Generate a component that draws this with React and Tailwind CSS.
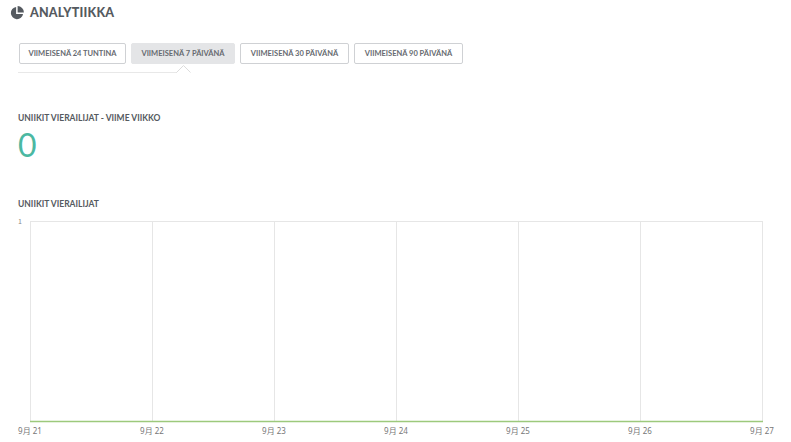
import React from 'react';

const TABS = [
  { label: 'VIIMEISENÄ 24 TUNTINA', w: 'w-[107px]' },
  { label: 'VIIMEISENÄ 7 PÄIVÄNÄ', w: 'w-[104px]', active: true },
  { label: 'VIIMEISENÄ 30 PÄIVÄNÄ', w: 'w-[109px]' },
  { label: 'VIIMEISENÄ 90 PÄIVÄNÄ', w: 'w-[109px]' },
];

const DAYS = ['9月 21', '9月 22', '9月 23', '9月 24', '9月 25', '9月 26', '9月 27'];

function PieIcon() {
  return (
    <svg width="14" height="14" viewBox="0 0 16 16" className="text-[#555a60]">
      <path d="M7 1.1A7 7 0 1 0 14.9 9H7z" fill="currentColor" />
      <path d="M8.7 0.1A7.2 7.2 0 0 1 15.9 7.3H8.7z" fill="currentColor" />
    </svg>
  );
}

function Chart() {
  const cols = [0, 122, 244, 366, 488, 610, 732];
  return (
    <svg width="734" height="202" className="block">
      <line x1="1" y1="0.5" x2="733" y2="0.5" stroke="#e6e6e6" />
      {cols.map(x => (
        <line key={x} x1={x + 0.5} y1="0" x2={x + 0.5} y2="200" stroke="#e6e6e6" />
      ))}
      <line x1="0" y1="200.5" x2="733" y2="200.5" stroke="#9dc97c" strokeWidth="1.5" />
    </svg>
  );
}

export default function App() {
  return (
    <div className="w-[791px] h-[442px] bg-white overflow-hidden text-[#555a60]" style={{ fontFamily: 'Lato, "Open Sans", sans-serif' }}>
      <div className="flex items-center gap-[6px] pl-[10px] h-[26px]">
        <PieIcon />
        <h1 className="text-[12.5px] font-black tracking-[0.2px]">ANALYTIIKKA</h1>
      </div>

      <div className="pl-[19px] mt-[17px] flex gap-[5px]">
        {TABS.map(t => (
          <button
            key={t.label}
            className={`${t.w} h-[21px] rounded-[2px] text-[7.5px] font-bold text-[#666a70] ${t.active ? 'bg-[#e4e5e7] border border-[#e4e5e7]' : 'bg-white border border-[#cfd1d4]'}`}
          >
            {t.label}
          </button>
        ))}
      </div>

      <div className="pl-[18px] mt-[1px] h-[8px] flex items-end">
        <div className="w-[159px] border-b border-[#e8e8e8]" />
        <svg width="16" height="8" className="block -ml-px">
          <polyline points="0.5,7.5 7.5,0.5 14.5,7.5" fill="none" stroke="#dcdcdc" />
        </svg>
      </div>

      <div className="pl-[18px] mt-[40px]">
        <h2 className="text-[8.5px] font-bold leading-[10px]">UNIIKIT VIERAILIJAT - VIIME VIIKKO</h2>
        <div className="text-[32px] leading-[32px] mt-[6px] text-[#4bb8a2] font-normal">0</div>
      </div>

      <div className="pl-[18px] mt-[38px]">
        <h2 className="text-[8.5px] font-bold leading-[10px]">UNIIKIT VIERAILIJAT</h2>
      </div>

      <div className="mt-[12px] flex">
        <div className="w-[30px] shrink-0 pl-[18px] text-[7px] text-[#888] leading-[7px] -mt-[3px]" style={{ fontFamily: '"Noto Sans CJK JP", "Noto Sans", sans-serif' }}>1</div>
        <Chart />
      </div>

      <div className="h-[16px] mt-[2px]" style={{ fontFamily: '"Noto Sans", "Noto Sans CJK JP", sans-serif' }}>
        <div className="flex ml-[-31px]">
          {DAYS.map(d => (
            <div key={d} className="w-[122px] shrink-0 text-center text-[8px] text-[#777]">{d}</div>
          ))}
        </div>
      </div>
    </div>
  );
}
